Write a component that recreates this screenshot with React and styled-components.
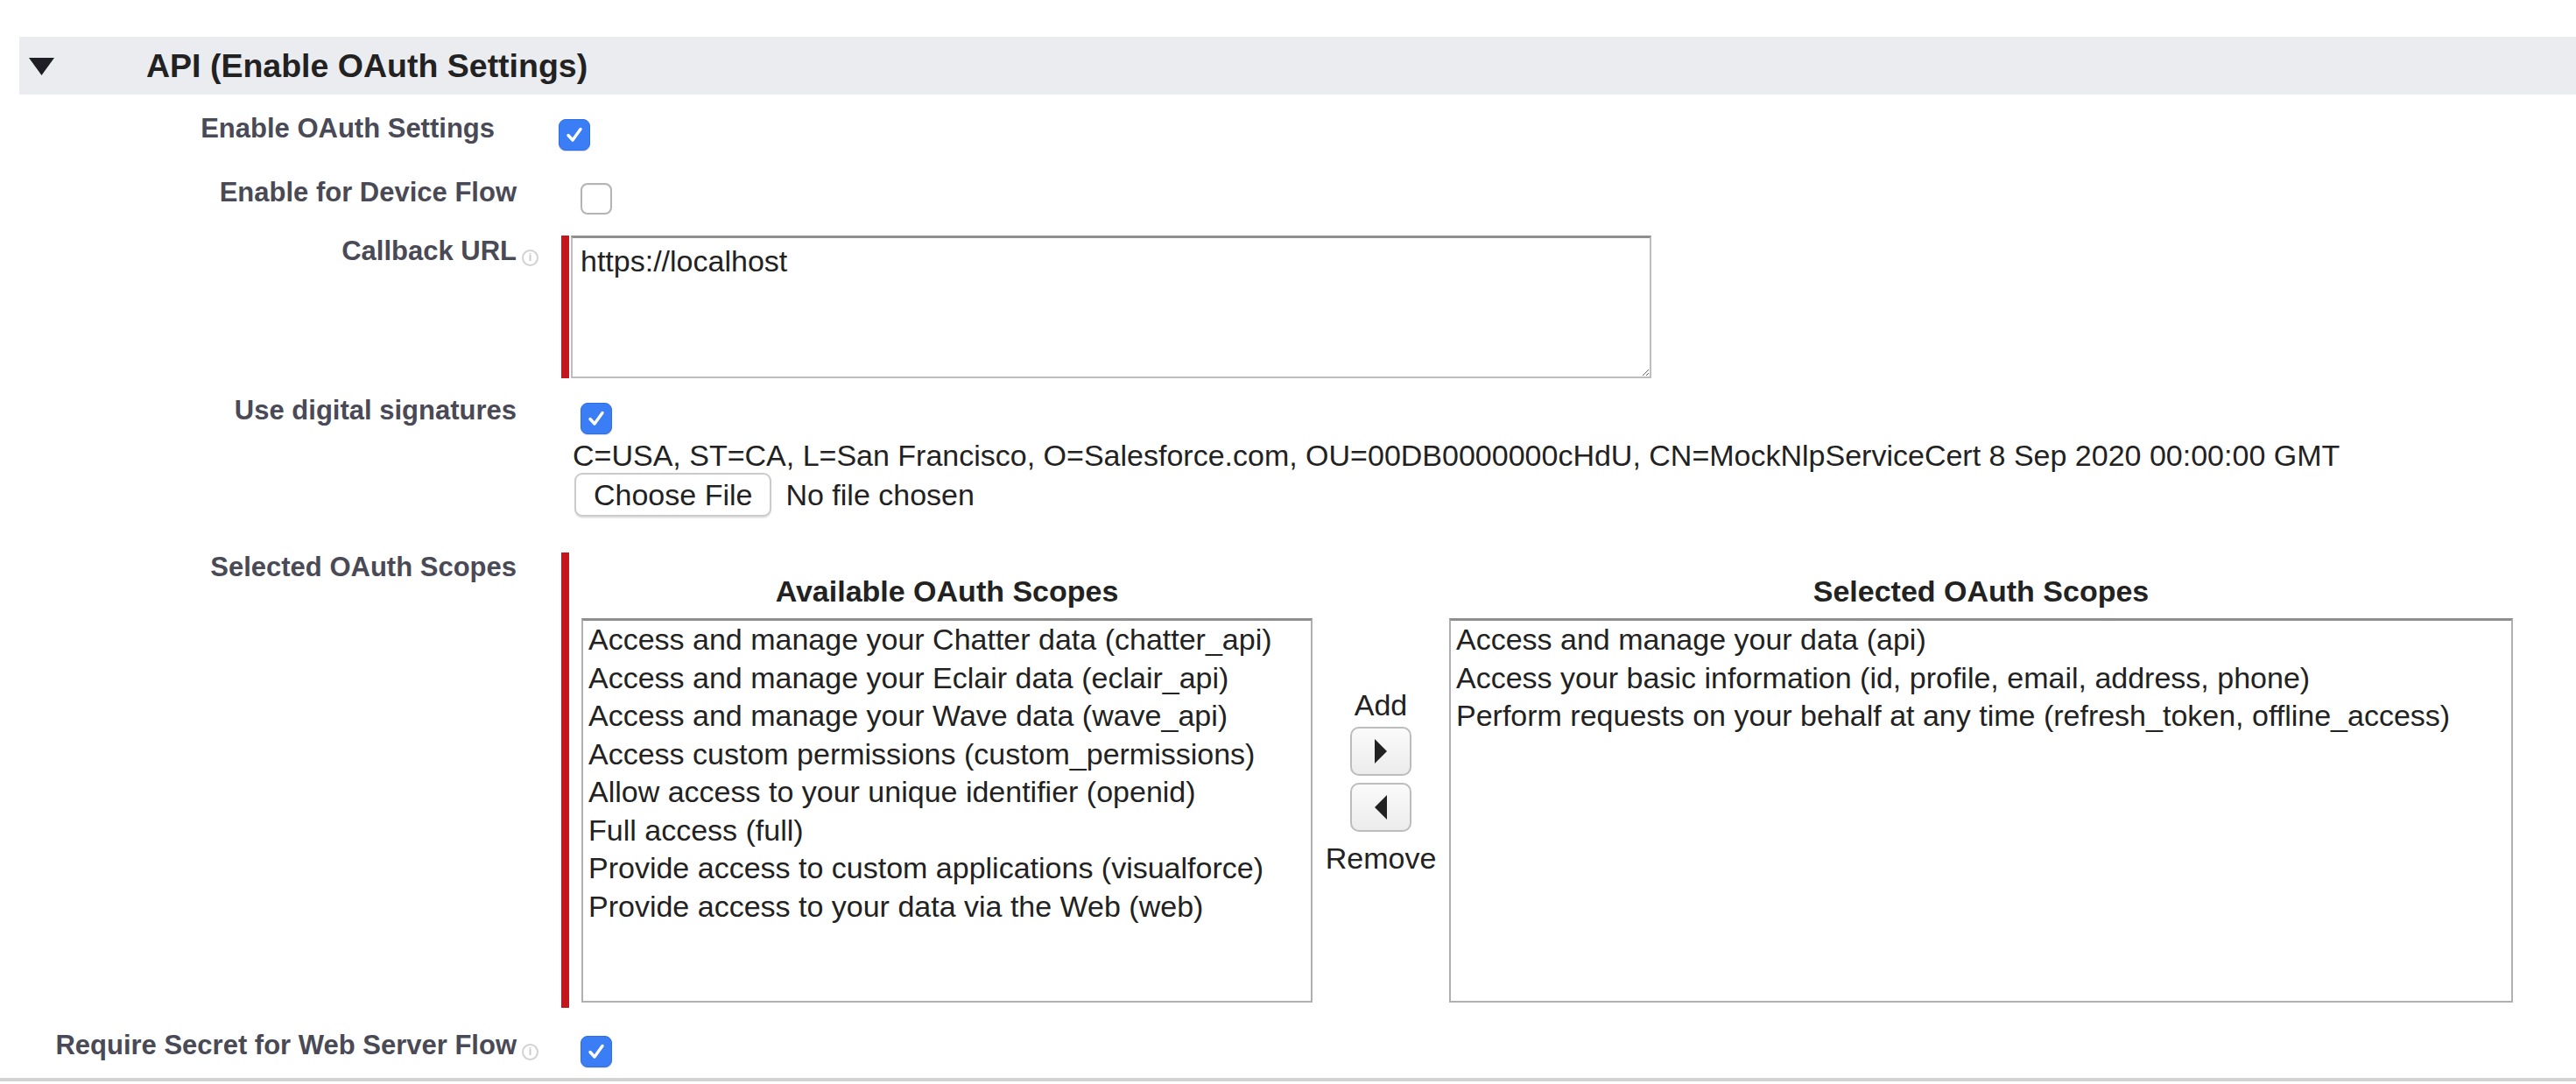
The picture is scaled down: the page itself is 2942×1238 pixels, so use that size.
import React from "react"
import styled, { createGlobalStyle } from "styled-components"

const GlobalStyle = createGlobalStyle`
  html, body {
    margin: 0;
    padding: 0;
    background: #fff;
  }
  body {
    font-family: "Liberation Sans", Arial, Helvetica, sans-serif;
    color: #222;
  }
`

const Page = styled.div`
  padding-top: 42px;
  width: 2942px;
  overflow: hidden;
`

const SectionBar = styled.div`
  margin-left: 22px;
  height: 66px;
  background: #ebecf0;
  display: flex;
  align-items: center;
`

const Twist = styled.svg`
  margin-left: 10px;
  width: 31px;
  height: 23px;
  flex-shrink: 0;
`

const SectionTitle = styled.h3`
  margin: 0 0 0 104px;
  font-size: 37.5px;
  font-weight: bold;
  color: #222;
  line-height: 44px;
`

const Row = styled.div`
  display: flex;
  align-items: flex-start;
  padding: 4px 0;
  margin-left: ${(p) => (p.$shift ? `${p.$shift}px` : "0")};
`

const Label = styled.div`
  width: 641px;
  flex-shrink: 0;
  box-sizing: border-box;
  padding-right: 51px;
  padding-top: ${(p) => (p.$top ?? 16)}px;
  text-align: right;
  font-size: 31px;
  font-weight: bold;
  line-height: 37px;
  color: #4a4a56;
  white-space: nowrap;
`

const HelpIcon = styled.span`
  display: inline-block;
  box-sizing: border-box;
  width: 19px;
  height: 19px;
  margin-left: 6px;
  margin-right: -25px;
  border-radius: 50%;
  border: 2px solid #d2d2d2;
  color: #c6c6c6;
  font-size: 12px;
  line-height: 15px;
  text-align: center;
  font-weight: bold;
  vertical-align: -1px;
`

const Field = styled.div`
  flex: 1;
  display: flex;
  flex-direction: column;
  align-items: flex-start;
`

const Box = styled.span`
  display: block;
  box-sizing: border-box;
  width: 36px;
  height: 36px;
  margin: ${(p) => (p.$top ?? 24)}px 0 ${(p) => (p.$bottom ?? 5)}px 22px;
  border-radius: 8px;
  background: ${(p) => (p.$checked ? "#3a7df4" : "#fff")};
  border: ${(p) => (p.$checked ? "1px solid #2f6fe0" : "2px solid #b4b4b4")};
  box-shadow: ${(p) => (p.$checked ? "0 1px 1px rgba(0,0,0,0.15)" : "inset 0 1px 1px rgba(0,0,0,0.06)")};
  display: flex;
  align-items: center;
  justify-content: center;
`

function Checkbox({ checked, top, bottom }) {
  return (
    <Box $checked={checked} $top={top} $bottom={bottom}>
      {checked && (
        <svg width="24" height="24" viewBox="0 0 24 24">
          <path d="M5 12.5 L10 18 L19 5.5" fill="none" stroke="#fff" strokeWidth="3.4" strokeLinecap="round" strokeLinejoin="round" />
        </svg>
      )}
    </Box>
  )
}

const RequiredBlock = styled.div`
  border-left: 9px solid #c4161c;
  padding-left: ${(p) => p.$indent}px;
  padding-top: ${(p) => p.$pt}px;
  padding-bottom: ${(p) => p.$pb}px;
  margin-top: ${(p) => p.$mt}px;
`

const UrlArea = styled.textarea`
  display: block;
  box-sizing: border-box;
  width: 1234px;
  height: 163px;
  margin: 0;
  padding: 6px 9px;
  border: 2px solid #bdbdbd;
  border-top: 3px solid #8f8f8f;
  border-radius: 0;
  font-family: "Liberation Sans", Arial, Helvetica, sans-serif;
  font-size: 34px;
  line-height: 40px;
  color: #222;
  background: #fff;
  outline: none;
  resize: both;
`

const CertText = styled.div`
  margin-left: 13px;
  font-size: 34px;
  line-height: 40px;
  color: #222;
  white-space: nowrap;
`

const FileRow = styled.div`
  margin: 0 0 31px 15px;
  display: flex;
  align-items: center;
  gap: 16px;
  font-size: 34px;
  color: #222;
`

const FileButton = styled.button`
  height: 50px;
  padding: 0 20px;
  background: #fff;
  border: 2px solid #cbcbcb;
  border-radius: 9px;
  box-shadow: 0 2px 1px rgba(0, 0, 0, 0.1);
  font-family: "Liberation Sans", Arial, Helvetica, sans-serif;
  font-size: 34px;
  color: #222;
`

const ScopesGrid = styled.div`
  display: grid;
  grid-template-columns: 835px 156px 1215px;
  grid-template-rows: 40px 439px;
  row-gap: 11px;
`

const ColHeader = styled.div`
  grid-row: 1;
  grid-column: ${(p) => p.$col};
  text-align: center;
  font-size: 34px;
  font-weight: bold;
  line-height: 40px;
  color: #222;
`

const ScopeList = styled.div`
  grid-row: 2;
  grid-column: ${(p) => p.$col};
  box-sizing: border-box;
  border: 2px solid #b0b0b0;
  border-top: 3px solid #8e8e8e;
  padding: 0 6px;
  background: #fff;
`

const ScopeItem = styled.div`
  font-size: 34px;
  line-height: 43.5px;
  color: #222;
  white-space: nowrap;
`

const Mover = styled.div`
  grid-row: 2;
  grid-column: 2;
  padding-top: 79px;
  display: flex;
  flex-direction: column;
  align-items: center;
`

const MoverText = styled.div`
  font-size: 34px;
  line-height: 40px;
  color: #222;
  margin-top: ${(p) => p.$mt || 0}px;
`

const ArrowButton = styled.button`
  box-sizing: border-box;
  width: 70px;
  height: 56px;
  margin-top: ${(p) => p.$mt}px;
  padding: 0;
  border: 2px solid #bcbcbc;
  border-radius: 10px;
  background: linear-gradient(#fbfbfb, #ececec);
  display: flex;
  align-items: center;
  justify-content: center;
`

const BottomLine = styled.div`
  margin-top: 3px;
  height: 4px;
  background: #d3d3d3;
`

const available = [
  "Access and manage your Chatter data (chatter_api)",
  "Access and manage your Eclair data (eclair_api)",
  "Access and manage your Wave data (wave_api)",
  "Access custom permissions (custom_permissions)",
  "Allow access to your unique identifier (openid)",
  "Full access (full)",
  "Provide access to custom applications (visualforce)",
  "Provide access to your data via the Web (web)",
]

const selected = [
  "Access and manage your data (api)",
  "Access your basic information (id, profile, email, address, phone)",
  "Perform requests on your behalf at any time (refresh_token, offline_access)",
]

export default function App() {
  return (
    <Page>
      <GlobalStyle />
      <SectionBar>
        <Twist viewBox="0 0 31 23">
          <polygon points="1,2 30,2 15.5,22" fill="#1e1e24" />
        </Twist>
        <SectionTitle>API (Enable OAuth Settings)</SectionTitle>
      </SectionBar>

      <Row $shift={-25}>
        <Label>Enable OAuth Settings</Label>
        <Field>
          <Checkbox checked />
        </Field>
      </Row>

      <Row>
        <Label>Enable for Device Flow</Label>
        <Field>
          <Checkbox />
        </Field>
      </Row>

      <Row>
        <Label $top={10}>
          Callback URL<HelpIcon>i</HelpIcon>
        </Label>
        <Field>
          <RequiredBlock $indent={2} $pt={0} $pb={0} $mt={11}>
            <UrlArea readOnly value="https://localhost" />
          </RequiredBlock>
        </Field>
      </Row>

      <Row>
        <Label $top={10}>Use digital signatures</Label>
        <Field>
          <Checkbox checked top={20} bottom={4} />
          <CertText>
            C=USA, ST=CA, L=San Francisco, O=Salesforce.com, OU=00DB0000000cHdU, CN=MockNlpServiceCert 8 Sep 2020 00:00:00 GMT
          </CertText>
          <FileRow>
            <FileButton type="button">Choose File</FileButton>
            <span>No file chosen</span>
          </FileRow>
        </Field>
      </Row>

      <Row>
        <Label $top={0}>Selected OAuth Scopes</Label>
        <Field>
          <RequiredBlock $indent={14} $pt={24} $pb={6} $mt={2}>
            <ScopesGrid>
              <ColHeader $col={1}>Available OAuth Scopes</ColHeader>
              <ColHeader $col={3}>Selected OAuth Scopes</ColHeader>
              <ScopeList $col={1}>
                {available.map((s) => (
                  <ScopeItem key={s}>{s}</ScopeItem>
                ))}
              </ScopeList>
              <Mover>
                <MoverText>Add</MoverText>
                <ArrowButton type="button" $mt={5}>
                  <svg width="16" height="30" viewBox="0 0 16 30">
                    <polygon points="1,1 15,15 1,29" fill="#222" />
                  </svg>
                </ArrowButton>
                <ArrowButton type="button" $mt={8}>
                  <svg width="16" height="30" viewBox="0 0 16 30">
                    <polygon points="15,1 1,15 15,29" fill="#222" />
                  </svg>
                </ArrowButton>
                <MoverText $mt={10}>Remove</MoverText>
              </Mover>
              <ScopeList $col={3}>
                {selected.map((s) => (
                  <ScopeItem key={s}>{s}</ScopeItem>
                ))}
              </ScopeList>
            </ScopesGrid>
          </RequiredBlock>
        </Field>
      </Row>

      <Row>
        <Label>
          Require Secret for Web Server Flow<HelpIcon>i</HelpIcon>
        </Label>
        <Field>
          <Checkbox checked />
        </Field>
      </Row>

      <BottomLine />
    </Page>
  )
}
